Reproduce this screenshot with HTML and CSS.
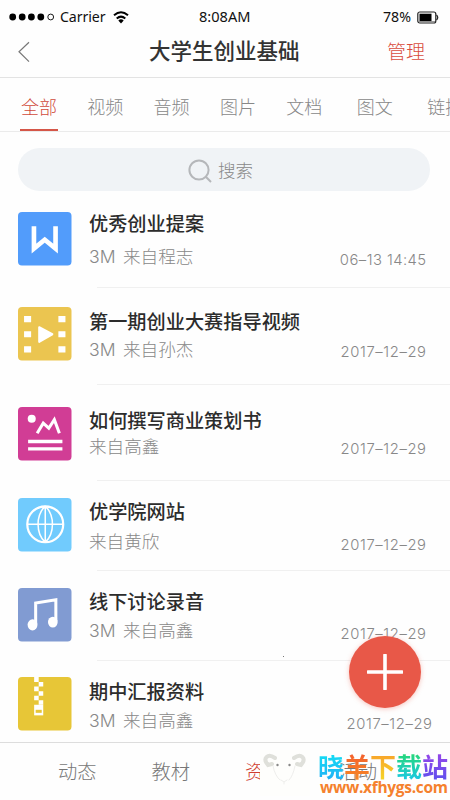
FILE: index.html
```html
<!DOCTYPE html>
<html lang="zh-CN">
<head>
<meta charset="utf-8">
<title>大学生创业基础</title>
<link rel="stylesheet" href="styles.css">
</head>
<body>
<div class="screen">
  <div class="status">
    <div class="carrier">
      <svg width="46" height="10" viewBox="0 0 46 10"><circle cx="3.7" cy="5" r="3.4"/><circle cx="13.2" cy="5" r="3.4"/><circle cx="22.4" cy="5" r="3.4"/><circle cx="31.8" cy="5" r="3.4"/><circle cx="41.7" cy="5" r="2.9" fill="none" stroke="#000" stroke-width=".9"/></svg>
      <span>Carrier</span>
      <svg class="wifi" width="16" height="13" viewBox="0 0 16 13" fill="none" stroke="#000" stroke-width="2"><path d="M1 4.3Q8-1.7 15 4.3M3.7 7.5Q8 3.8 12.3 7.5"/><path d="M5.3 9.4Q8 7.3 10.7 9.4L8 12.4Z" fill="#000" stroke="none"/></svg>
    </div>
    <span class="clock">8:08AM</span>
    <div class="power"><span>78%</span>
      <svg width="22" height="13" viewBox="0 0 22 13"><rect x=".8" y="1" width="18" height="11" rx="2" fill="#fff" stroke="#222" stroke-width="1.2"/><path d="M2.5 2.7h12v7.6h-12z"/><path d="M2 10.8h16" stroke="#888" stroke-width="1.3"/><path d="M19.5 4Q22 6.5 19.5 9" fill="none" stroke="#222" stroke-width="1.2"/></svg>
    </div>
  </div>
  <header class="header">
    <svg class="back" width="12" height="22" viewBox="0 0 12 22"><path d="M11 1.2L1 10.7L11 20.6" fill="none" stroke="#777" stroke-width="1.2"/></svg>
    <h1>大学生创业基础</h1>
    <span class="manage">管理</span>
  </header>
  <nav class="tabs">
    <span class="tab active">全部</span><span class="tab">视频</span><span class="tab">音频</span><span class="tab">图片</span><span class="tab wide">文档</span><span class="tab wide">图文</span><span class="tab">链接</span>
  </nav>
  <div class="search">
    <svg width="24" height="24" viewBox="0 0 24 24" fill="none" stroke="#b5b7ba" stroke-width="2"><circle cx="11" cy="11" r="9.6"/><path d="M17.8 17.8L23 23"/></svg>
    <span>搜索</span>
  </div>
  <main class="list">
    <article class="row r1">
      <svg class="icon" viewBox="0 0 53 53"><rect width="53" height="53" rx="4" fill="#529cfb"/><path d="M15.8 14V36.2L26.5 27.5L37.2 36.2V14" fill="none" stroke="#fff" stroke-width="4.6"/></svg>
      <div class="info"><h2>优秀创业提案</h2><p>3M 来自程志</p></div><time>06–13 14:45</time>
    </article>
    <article class="row r2">
      <svg class="icon" viewBox="0 0 53 53"><rect width="53" height="53" rx="4" fill="#ebc550"/><path fill="#fff" d="M6 9h7v6H6zM6 24h7v6H6zM6 39h7v6H6zM40 9h7v6h-7zM40 24h7v6h-7zM40 39h7v6h-7z"/><path d="M21 20L34 27L21 34.5Z" fill="#fff" stroke="#fff" stroke-width="2" stroke-linejoin="round"/></svg>
      <div class="info"><h2>第一期创业大赛指导视频</h2><p>3M 来自孙杰</p></div><time>2017–12–29</time>
    </article>
    <article class="row r3">
      <svg class="icon" viewBox="0 0 53 53"><rect width="53" height="53" rx="4" fill="#d13d95"/><circle cx="13.6" cy="11.6" r="4" fill="#fff"/><path d="M19 26L25 16L30.5 21L36 12.5L41 26" fill="none" stroke="#fff" stroke-width="3"/><path d="M10 34.2H44M10 41.5H44" stroke="#fff" stroke-width="3.4"/></svg>
      <div class="info"><h2>如何撰写商业策划书</h2><p>来自高鑫</p></div><time>2017–12–29</time>
    </article>
    <article class="row r4">
      <svg class="icon" viewBox="0 0 53 53"><rect width="53" height="53" rx="4" fill="#71cbfd"/><g fill="none" stroke="#fff" stroke-width="1.5"><circle cx="27" cy="26" r="17.8" stroke-width="2.2"/><path d="M9 26H45M27 8V44M27 8C17.5 17 17.5 35 27 44M27 8C36.5 17 36.5 35 27 44"/></g></svg>
      <div class="info"><h2>优学院网站</h2><p>来自黄欣</p></div><time>2017–12–29</time>
    </article>
    <article class="row r5">
      <svg class="icon" viewBox="0 0 53 53"><rect width="53" height="53" rx="4" fill="#819bd2"/><path d="M17.5 36V14.8L37.5 11.7V33" fill="none" stroke="#fff" stroke-width="3"/><ellipse cx="14.4" cy="36.5" rx="4.9" ry="5.5" fill="#fff"/><ellipse cx="34.5" cy="33.8" rx="4.8" ry="5.3" fill="#fff"/></svg>
      <div class="info"><h2>线下讨论录音</h2><p>3M 来自高鑫</p></div><time>2017–12–29</time>
    </article>
    <article class="row r6">
      <svg class="icon" viewBox="0 0 53 53"><rect width="53" height="53" rx="4" fill="#e7c637"/><path fill="#fff" d="M16 0h4.5v5H16zM20.5 5H25v4.5h-4.5zM16 9.5h4.5V14H16zM20.5 14H25v4.5h-4.5zM16 18.5h4.5V23H16zM20.5 23H25v4.5h-4.5z"/><path fill="#fff" d="M16 27.5h9V38h-9z"/><path fill="#e7c637" d="M17.5 32.5h6v3h-6z"/></svg>
      <div class="info"><h2>期中汇报资料</h2><p>3M 来自高鑫</p></div><time>2017–12–29</time>
    </article>
  </main>
  <footer class="bottom"><span>动态</span><span>教材</span><span class="current">资料</span><span>活动</span></footer>
  <i class="speck"></i>
  <div class="fab"><svg width="36" height="36" viewBox="0 0 36 36"><path d="M18 1V35M1 18H35" stroke="#fff" stroke-width="3.6" stroke-linecap="round"/></svg></div>
  <svg class="sheep" width="50" height="46" viewBox="0 0 50 46"><path fill="#fefefc" d="M0 0h50v46H0z"/><g fill="none" stroke-linecap="round"><path d="M15 8C8 3 2 8 8 15L12 14M34 8C41 3 47 8 41 15L37 14" stroke="#dfe0da" stroke-width="4"/><path d="M13 16Q15 26 20 30M35 16Q33 26 29 30M21 30L24 32L27 30M24 32V34" stroke="#eeeeec" stroke-width="1"/></g><circle cx="17.5" cy="15" r="1.2" fill="#888"/><circle cx="29.5" cy="15" r="1.2" fill="#888"/></svg>
  <div class="brand">
    <div class="brand-name"><span class="c1">晓</span><span class="c2">羊</span><span class="c3">下</span><span class="c4">载</span><span class="c5">站</span></div>
    <div class="brand-url">www.xfhygs.com</div>
  </div>
</div>
</body>
</html>
```
FILE: styles.css
```css
* { box-sizing: border-box; margin: 0; padding: 0; }
body { background: #fff; font-family: "Noto Sans CJK SC", sans-serif; font-weight: 300; color: #888; }
svg { display: block; flex: none; }
.screen { position: relative; width: 450px; height: 800px; overflow: hidden; background: #fefefe; }
.status { height: 26px; padding: 7px 11px 0 9px; display: grid; grid-template-columns: 190px 1fr 60px; font: 400 14.2px/20px "Noto Sans", sans-serif; color: #111; }
.carrier { display: flex; align-items: center; }
.carrier span { width: 45px; margin-left: 5px; letter-spacing: -.1px; }
.wifi { margin-left: 8px; }
.clock { font-size: 14.6px; line-height: 19px; letter-spacing: 0; }
.power { display: flex; align-items: center; justify-content: flex-end; gap: 6px; letter-spacing: 0; }
.header { height: 52px; border-bottom: 1px solid #e3e3e3; padding: 0 25px 0 18px; display: grid; grid-template-columns: 131px 1fr auto; align-items: center; }
.header h1 { font-size: 21.5px; line-height: 30px; font-weight: 500; color: #333; margin-top: -4px; }
.manage { font-size: 19px; line-height: 28px; color: #d94c3d; margin-top: -2px; }
.tabs { height: 54px; border-bottom: 1px solid #ebebeb; padding-left: 20px; display: flex; overflow: hidden; }
.tab { flex: 0 0 38px; height: 54px; margin-right: 28.3px; text-align: center; font-size: 18px; line-height: 57px; white-space: nowrap; }
.tab.wide { margin-right: 32.5px; }
.tab.active { color: #d04a3b; border-bottom: 3px solid #d55648; }
.search { width: 412px; height: 43px; margin: 16px 0 0 18px; border-radius: 22px; background: #f0f3f6; display: flex; justify-content: center; align-items: center; gap: 6px; font-size: 17.5px; padding-right: 7px; }
.search svg { margin-top: 2px; }
.row { display: flex; align-items: flex-start; padding: 0 24px 0 18px; background: linear-gradient(#f0f0f0, #f0f0f0) 97px 100% / 353px 1px no-repeat; }
.icon { width: 53.5px; height: 53.5px; margin-top: var(--icon); }
.info { flex: 1; margin: var(--title) 0 0 17.5px; white-space: nowrap; }
.info h2 { font-size: 19.2px; line-height: 24px; font-weight: 500; color: #2c2c2c; }
.info p { font-family: Inter, "Noto Sans CJK SC", sans-serif; font-size: 17.6px; line-height: 24px; word-spacing: 2.5px; margin-top: var(--gap); }
.row time { width: 88px; margin-top: var(--date); font: 300 14.8px/20px Inter, sans-serif; letter-spacing: .6px; margin-right: -.6px; text-align: right; white-space: nowrap; }
.r1 { height: 97px; --icon: 21px; --title: 20px; --gap: 10px; --date: 59px; }
.r1 time { letter-spacing: .45px; }
.r2 { height: 97px; --icon: 19px; --title: 21px; --gap: 5px; --date: 54px; }
.r3 { height: 96px; --icon: 22px; --title: 23px; --gap: 3px; --date: 54px; }
.r4 { height: 90px; --icon: 17px; --title: 18px; --gap: 7px; --date: 54px; }
.r5 { height: 90px; --icon: 17px; --title: 18px; --gap: 6px; --date: 53px; }
.r6 { height: 81px; --icon: 16px; --title: 18px; --gap: 6px; --date: 53px; padding-right: 18px; background: none; }
.bottom { height: 58px; border-top: 1px solid #ddd; padding-left: 58px; display: flex; gap: 54.5px; font-size: 19.3px; line-height: 56px; color: #777; }
.bottom span { width: 39px; white-space: nowrap; }
.bottom .current { color: #d04030; }
.speck { position: absolute; left: 283px; top: 656px; width: 1px; height: 1px; background: #777; }
.fab { position: absolute; left: 349px; top: 636px; width: 72px; height: 72px; border-radius: 50%; background: #e85848; box-shadow: 0 1px 5px rgba(232,88,72,.35); display: flex; align-items: center; justify-content: center; }
.sheep { position: absolute; left: 260px; top: 750px; }
.brand { position: absolute; left: 318px; top: 751px; width: 132px; white-space: nowrap; }
.brand-name { display: flex; font-size: 26px; line-height: 30px; font-weight: 700; }
.brand-name span { width: 26px; background-clip: text; -webkit-background-clip: text; color: transparent; }
.brand-name .c1 { background-image: linear-gradient(#14e2f4, #21aef5); }
.brand-name .c2 { background-image: linear-gradient(#f25d2f, #f88924); }
.brand-name .c3 { background-image: linear-gradient(#f99d2b, #f5d728); }
.brand-name .c4 { background-image: linear-gradient(#28d96d, #18c7e9); }
.brand-name .c5 { background-image: linear-gradient(#9a45e8, #5d50ee); }
.brand-url { margin: -3px 0 0 2px; font: 700 15.5px/18px "Open Sans", sans-serif; letter-spacing: -.3px; color: #f5812d; }
```
